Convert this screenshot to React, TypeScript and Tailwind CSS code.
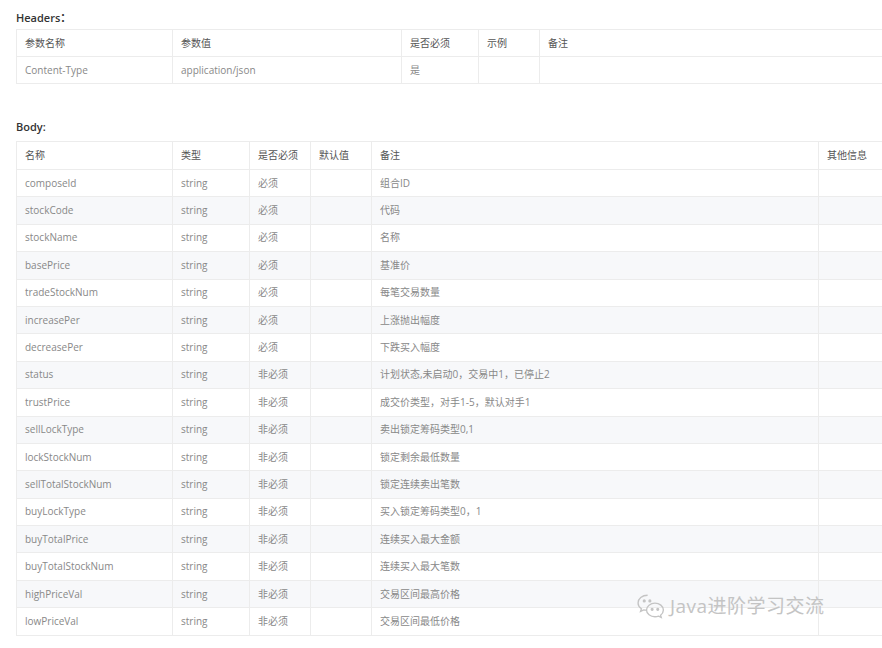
const headerCols = ["w-[156px]", "w-[229px]", "w-[77px]", "w-[61px]", "flex-1"];
const bodyCols = ["w-[156px]", "w-[77px]", "w-[61px]", "w-[61px]", "w-[447px]", "flex-1"];

const rows: [string, string, string, string][] = [
  ["composeId", "string", "必须", "组合ID"],
  ["stockCode", "string", "必须", "代码"],
  ["stockName", "string", "必须", "名称"],
  ["basePrice", "string", "必须", "基准价"],
  ["tradeStockNum", "string", "必须", "每笔交易数量"],
  ["increasePer", "string", "必须", "上涨抛出幅度"],
  ["decreasePer", "string", "必须", "下跌买入幅度"],
  ["status", "string", "非必须", "计划状态,未启动0，交易中1，已停止2"],
  ["trustPrice", "string", "非必须", "成交价类型，对手1-5，默认对手1"],
  ["sellLockType", "string", "非必须", "卖出锁定筹码类型0,1"],
  ["lockStockNum", "string", "非必须", "锁定剩余最低数量"],
  ["sellTotalStockNum", "string", "非必须", "锁定连续卖出笔数"],
  ["buyLockType", "string", "非必须", "买入锁定筹码类型0，1"],
  ["buyTotalPrice", "string", "非必须", "连续买入最大金额"],
  ["buyTotalStockNum", "string", "非必须", "连续买入最大笔数"],
  ["highPriceVal", "string", "非必须", "交易区间最高价格"],
  ["lowPriceVal", "string", "非必须", "交易区间最低价格"],
];

function Row({ cells, cols, head, alt, h }: { cells: string[]; cols: string[]; head?: boolean; alt?: boolean; h: string }) {
  return (
    <div className={`flex border-b border-[#ececec] ${h} ${alt ? "bg-[#f7f8fa]" : "bg-white"}`}>
      {cells.map((c, i) => (
        <div
          key={i}
          className={`${cols[i]} shrink-0 flex items-center px-2 border-r border-[#ececec] text-[10px] ${head ? "text-[#555]" : "text-[#888]"}`}
        >
          {c}
        </div>
      ))}
    </div>
  );
}

export default function App() {
  return (
    <div
      className="relative w-[882px] h-[648px] overflow-hidden bg-white"
      style={{ fontFamily: '"Open Sans", "Noto Sans CJK SC", sans-serif' }}
    >
      <div className="pl-4 pt-[8px] w-[900px]">
        <div className="text-[11px] font-semibold text-[#333] h-[21px] flex items-center">Headers：</div>
        <div className="border-t border-l border-[#ececec]">
          <Row h="h-[27px]" head cols={headerCols} cells={["参数名称", "参数值", "是否必须", "示例", "备注"]} />
          <Row h="h-[27px]" cols={headerCols} cells={["Content-Type", "application/json", "是", "", ""]} />
        </div>
        <div className="text-[11px] font-semibold text-[#333] mt-[33px] h-[21px] flex items-center">Body:</div>
        <div className="border-t border-l border-[#ececec] mt-[3px]">
          <Row h="h-[28px]" head cols={bodyCols} cells={["名称", "类型", "是否必须", "默认值", "备注", "其他信息"]} />
          {rows.map((r, i) => (
            <Row key={r[0]} h="h-[27.4px]" alt={i % 2 === 1} cols={bodyCols} cells={[r[0], r[1], r[2], "", r[3], ""]} />
          ))}
        </div>
      </div>
      <div className="absolute left-[636px] top-[592px] flex items-center gap-1 text-[#c4c4c4]">
        <svg width="30" height="27" viewBox="0 0 26 24" fill="none" stroke="#c4c4c4" strokeWidth="1.2">
          <path d="M10 2C5 2 1.5 5 1.5 8.8c0 2.2 1.2 4 3 5.2l-.8 2.4 2.8-1.4c1 .3 2 .4 3 .4" />
          <circle cx="7" cy="7" r=".8" fill="#c4c4c4" />
          <circle cx="12" cy="7" r=".8" fill="#c4c4c4" />
          <path d="M16.5 9c4 0 7.5 2.7 7.5 6.2 0 1.9-1 3.5-2.5 4.6l.6 2-2.3-1.2c-1 .3-2.1.5-3.3.5-4 0-7.5-2.7-7.5-6S12.5 9 16.5 9z" />
          <circle cx="14" cy="14.5" r=".8" fill="#c4c4c4" />
          <circle cx="19" cy="14.5" r=".8" fill="#c4c4c4" />
        </svg>
        <span className="text-[19px] tracking-wide">Java进阶学习交流</span>
      </div>
    </div>
  );
}
